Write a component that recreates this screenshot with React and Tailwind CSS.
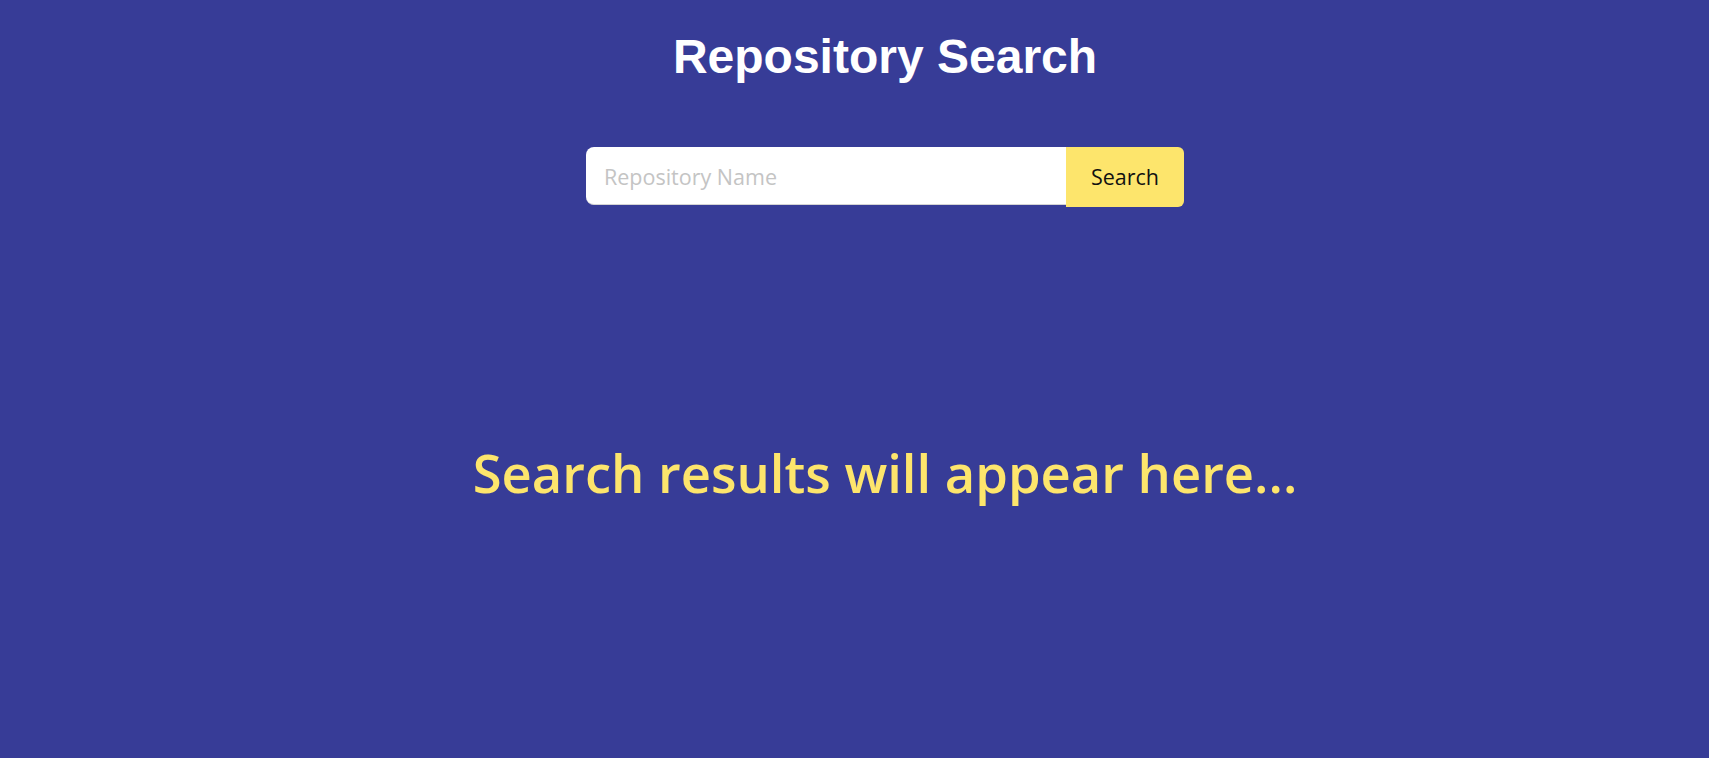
export default function App() {
  return (
    <div className="min-h-screen bg-[#373c97] flex flex-col items-center pl-[61px] font-['Open_Sans','Noto_Sans',sans-serif]">
      <h1 className="mt-[33px] text-[48px] leading-none font-bold text-white font-['Liberation_Sans',Arial,sans-serif]">
        Repository Search
      </h1>

      <form className="mt-[66px] flex items-start" onSubmit={(e) => e.preventDefault()}>
        <input
          type="text"
          placeholder="Repository Name"
          className="w-[480px] h-[58px] bg-white rounded-l-lg border-b border-[#d4d4d4] pl-[18px] pt-[2px] text-[21.5px] text-gray-900 placeholder:text-[#c4c4c4] outline-none"
        />
        <button
          type="submit"
          className="w-[118px] h-[60px] bg-[#fde56c] rounded-r-md text-[21.5px] text-[#111]"
        >
          Search
        </button>
      </form>

      <h2 className="mt-[240px] text-[52.5px] leading-none font-semibold text-[#fde56c]">
        Search results will appear here...
      </h2>
    </div>
  );
}
